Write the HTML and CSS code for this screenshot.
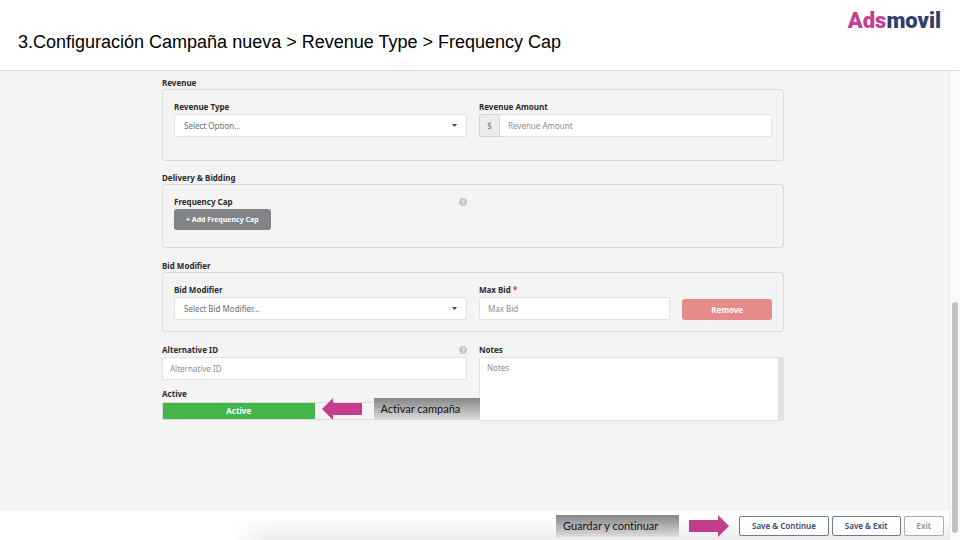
FILE: index.html
```html
<!DOCTYPE html>
<html lang="es">
<head>
<meta charset="utf-8">
<meta name="viewport" content="width=device-width, initial-scale=1">
<title>Configuración Campaña nueva</title>
<link rel="stylesheet" href="styles.css">
</head>
<body>
<header class="header">
  <h1 class="title">3.Configuración Campaña nueva &gt; Revenue Type &gt; Frequency Cap</h1>
  <div class="logo"><span class="logo-ads">Ads</span><span class="logo-movil">movil</span></div>
</header>
<div class="viewport">
  <div class="page">
    <main class="form">
      <h2 class="heading">Revenue</h2>
      <section class="panel panel-revenue columns">
        <div class="field">
          <label class="label" for="revenue-type">Revenue Type</label>
          <div class="select">
            <select class="control" id="revenue-type"><option>Select Option...</option></select>
            <svg class="caret" viewBox="0 0 5 3"><path d="M0 0h5L2.500 3z"/></svg>
          </div>
        </div>
        <div class="field">
          <label class="label" for="revenue-amount">Revenue Amount</label>
          <div class="group">
            <span class="addon">$</span>
            <input class="control" id="revenue-amount" type="text" placeholder="Revenue Amount">
          </div>
        </div>
      </section>

      <h2 class="heading">Delivery &amp; Bidding</h2>
      <section class="panel panel-delivery columns">
        <div class="field">
          <div class="label-row">
            <span class="label">Frequency Cap</span>
            <svg class="help" viewBox="0 0 16 16"><circle cx="8" cy="8" r="8"/><path d="M5.500 6.200C5.500 3 10.800 3 10.800 6.100C10.800 8 8.200 7.900 8.200 9.800M8.200 11.300V13"/></svg>
          </div>
          <button class="btn btn-add" type="button">+ Add Frequency Cap</button>
        </div>
      </section>

      <h2 class="heading">Bid Modifier</h2>
      <section class="panel panel-bid columns">
        <div class="field">
          <label class="label" for="bid-modifier">Bid Modifier</label>
          <div class="select">
            <select class="control" id="bid-modifier"><option>Select Bid Modifier...</option></select>
            <svg class="caret" viewBox="0 0 5 3"><path d="M0 0h5L2.500 3z"/></svg>
          </div>
        </div>
        <div class="bid">
          <div class="field">
            <label class="label" for="max-bid">Max Bid <span class="required">*</span></label>
            <input class="control" id="max-bid" type="text" placeholder="Max Bid">
          </div>
          <button class="btn btn-remove" type="button">Remove</button>
        </div>
      </section>

      <section class="columns">
        <div class="stack">
          <div class="field">
            <div class="label-row">
              <label class="label" for="alternative-id">Alternative ID</label>
              <svg class="help" viewBox="0 0 16 16"><circle cx="8" cy="8" r="8"/><path d="M5.500 6.200C5.500 3 10.800 3 10.800 6.100C10.800 8 8.200 7.900 8.200 9.800M8.200 11.300V13"/></svg>
            </div>
            <input class="control control-flush" id="alternative-id" type="text" placeholder="Alternative ID">
          </div>
          <fieldset class="status">
            <legend class="label">Active</legend>
            <div class="toggle">
              <label class="option"><input type="radio" name="status" checked>Active</label>
              <label class="option"><input type="radio" name="status" aria-label="Inactive"></label>
              <div class="note-active">
                <svg class="arrow" viewBox="0 0 40 22"><path d="M0 11L11 0v5h29v12H11v5z"/></svg>
                <span class="callout">Activar campaña</span>
              </div>
            </div>
          </fieldset>
        </div>
        <div class="field">
          <label class="label" for="notes">Notes</label>
          <textarea class="control notes" id="notes" placeholder="Notes"></textarea>
        </div>
      </section>
    </main>
    <footer class="footer">
      <span class="callout callout-wide">Guardar y continuar</span>
      <svg class="arrow" viewBox="0 0 40 22"><path d="M40 11L29 0v5H0v12h29v5z"/></svg>
      <div class="actions">
        <button class="btn btn-outline" type="button">Save &amp; Continue</button>
        <button class="btn btn-outline" type="button">Save &amp; Exit</button>
        <button class="btn btn-outline btn-exit" type="button">Exit</button>
      </div>
    </footer>
  </div>
  <div class="scrollbar"><div class="thumb"></div></div>
</div>
</body>
</html>
```
FILE: styles.css
```css
* {
  box-sizing: border-box;
}

body {
  margin: 0;
  min-height: 100vh;
  display: flex;
  flex-direction: column;
  background: #fff;
  color: #2b2b2b;
  font: 8px/12px "Noto Sans", "Open Sans", sans-serif;
}

button, input, select, textarea {
  font: inherit;
}

.header {
  display: flex;
  justify-content: space-between;
  align-items: flex-start;
  height: 71px;
  padding: 8px 19px 0 18px;
  border-bottom: 1px solid #dedede;
}

.title {
  margin: 24px 0 0;
  font: 18px/20px "Liberation Sans", Arial, sans-serif;
  color: #000;
}

.logo {
  font: 900 22px/26px Roboto, sans-serif;
}

.logo-ads {
  color: #c63d8f;
}

.logo-movil {
  color: #2c406b;
}

.viewport {
  flex: 1;
  display: flex;
}

.page {
  flex: 1;
  display: flex;
  flex-direction: column;
}

.form {
  flex: 1;
  padding: 6px 165px 24px 162px;
  background: #f4f4f4;
}

.heading, .label {
  display: block;
  margin: 0;
  padding: 0;
  font-size: 8px;
  line-height: 12px;
  font-weight: 700;
}

.columns {
  display: grid;
  grid-template-columns: 1fr 1fr;
  gap: 12px;
}

.panel {
  margin-bottom: 12px;
  padding: 11px;
  border: 1px solid #dcdcdc;
  border-radius: 3px;
}

.panel-revenue {
  margin-bottom: 11px;
  padding-bottom: 23px;
}

.panel-delivery {
  padding-bottom: 17px;
}

.field {
  display: flex;
  flex-direction: column;
  align-items: stretch;
  gap: 1px;
  min-width: 0;
}

.label-row {
  display: flex;
  justify-content: space-between;
  align-items: center;
}

.help {
  width: 8px;
  height: 8px;
  fill: #c0c8ce;
}

.help path {
  fill: none;
  stroke: #f4f4f4;
  stroke-width: 2;
}

.required {
  color: #e5322d;
}

.control {
  appearance: none;
  display: block;
  width: 100%;
  min-width: 0;
  height: 23px;
  margin: 0;
  padding: 0 8px;
  border: 1px solid #e2e2e2;
  border-radius: 2px;
  background: #fff;
  color: #6e6e6e;
  outline: none;
}

.control::placeholder {
  color: #8e8e8e;
  opacity: 1;
}

.control-flush {
  padding: 0 7px;
}

.select {
  position: relative;
}

.select .control {
  padding: 0 20px 0 9px;
}

.caret {
  position: absolute;
  right: 10px;
  top: 10px;
  width: 5px;
  height: 3px;
  fill: #444;
}

.group {
  display: flex;
}

.group .control {
  border-left: 0;
  border-radius: 0 2px 2px 0;
}

.addon {
  flex: none;
  width: 21px;
  border: 1px solid #d6d6d6;
  border-radius: 2px 0 0 2px;
  background: #ececec;
  color: #777;
  line-height: 21px;
  text-align: center;
}

.btn {
  padding: 0;
  border: 0;
  border-radius: 3px;
  color: #fff;
  font-weight: 700;
  white-space: nowrap;
}

.btn-add {
  align-self: flex-start;
  height: 21px;
  padding: 0 12px;
  background: #808487;
  font-size: 7px;
}

.bid {
  display: grid;
  grid-template-columns: 192fr 90fr;
  gap: 12px;
}

.btn-remove {
  align-self: end;
  height: 21px;
  background: #e58b8b;
}

.stack {
  display: flex;
  flex-direction: column;
  gap: 8px;
}

.status {
  min-width: 0;
  margin: 0;
  padding: 0;
  border: 0;
}

.toggle {
  position: relative;
  display: grid;
  grid-template-columns: 1fr 1fr;
  height: 18px;
  margin-top: 2px;
  border: 1px solid #dedede;
  border-radius: 2px;
}

.option {
  display: block;
  line-height: 16px;
  text-align: center;
  font-weight: 700;
}

.option:has(:checked) {
  background: #43b649;
  color: #fff;
}

.option input {
  position: absolute;
  opacity: 0;
  margin: 0;
}

.note-active {
  position: absolute;
  left: calc(50% + 7px);
  right: -14px;
  top: -5px;
  display: flex;
  align-items: center;
  gap: 12px;
}

.arrow {
  flex: none;
  width: 40px;
  height: 22px;
  fill: #c43c8c;
}

.callout {
  flex: 1;
  padding: 0 7px;
  background: linear-gradient(#858585, #dfdddf);
  color: #111;
  font: 11px/22px Lato, Carlito, sans-serif;
  font-variant-ligatures: none;
  white-space: nowrap;
}

.callout-wide {
  flex: none;
  width: 123px;
}

.notes {
  height: 64px;
  padding: 4px 7px;
  border-right: 6px solid #e2e2e2;
  resize: none;
}

.footer {
  display: flex;
  justify-content: flex-end;
  align-items: center;
  gap: 10px;
  height: 29px;
  padding: 0 5px 0 0;
  background:
    linear-gradient(90deg, #fff 230px, transparent 270px),
    linear-gradient(#fff 20%, #ececec);
}

.actions {
  display: flex;
  gap: 3px;
}

.btn-outline {
  height: 20px;
  padding: 0 12px;
  border: 1px solid #6b7a93;
  border-radius: 2px;
  background: #fff;
  color: #34456b;
  font-weight: 600;
}

.btn-exit {
  border-color: #a8adb5;
  color: #8a8f98;
}

.scrollbar {
  display: flex;
  flex-direction: column;
  justify-content: flex-end;
  align-items: center;
  width: 11px;
  padding-bottom: 7px;
  border-left: 1px solid #e8e8e8;
  background: #fafafa;
}

.thumb {
  width: 6px;
  height: 50%;
  border-radius: 3px;
  background: #c1c1c1;
}
```
